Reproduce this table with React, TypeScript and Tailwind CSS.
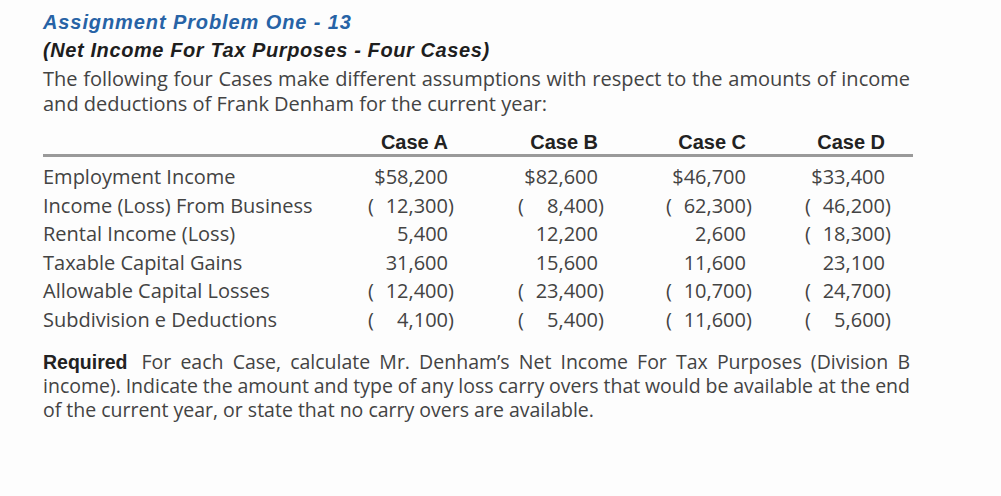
import React from 'react';

const cases = ['Case A', 'Case B', 'Case C', 'Case D'];

type Val = { v: string; neg?: boolean };

const rows: { label: string; vals: Val[] }[] = [
  { label: 'Employment Income',            vals: [{ v: '$58,200' }, { v: '$82,600' }, { v: '$46,700' }, { v: '$33,400' }] },
  { label: 'Income (Loss) From Business',  vals: [{ v: '12,300', neg: true }, { v: '8,400', neg: true }, { v: '62,300', neg: true }, { v: '46,200', neg: true }] },
  { label: 'Rental Income (Loss)',         vals: [{ v: '5,400' }, { v: '12,200' }, { v: '2,600' }, { v: '18,300', neg: true }] },
  { label: 'Taxable Capital Gains',        vals: [{ v: '31,600' }, { v: '15,600' }, { v: '11,600' }, { v: '23,100' }] },
  { label: 'Allowable Capital Losses',     vals: [{ v: '12,400', neg: true }, { v: '23,400', neg: true }, { v: '10,700', neg: true }, { v: '24,700', neg: true }] },
  { label: 'Subdivision e Deductions',     vals: [{ v: '4,100', neg: true }, { v: '5,400', neg: true }, { v: '11,600', neg: true }, { v: '5,600', neg: true }] },
];

// column widths after the label column, each ends where the figures line up
const colWidths = ['w-[88px]', 'w-[150px]', 'w-[148px]', 'w-[139px]'];

const Amount: React.FC<{ val: Val; width: string }> = ({ val, width }) => (
  <div className={`${width} flex justify-end`}>
    <div className="w-[80px] flex">
      <span className={val.neg ? '' : 'invisible'}>(</span>
      <span className="flex-1 text-right">{val.v}</span>
      <span className={`w-0 ${val.neg ? '' : 'invisible'}`}>)</span>
    </div>
  </div>
);

// justified line, as set in the book
const JLine: React.FC<{ children: React.ReactNode; className?: string }> = ({ children, className = '' }) => (
  <div className={`text-justify [text-align-last:justify] whitespace-nowrap ${className}`}>{children}</div>
);

export default function App() {
  return (
    <div className="min-h-[496px] w-[1001px] bg-[#fdfdfd] pl-[43px] pt-[8px] text-[#434343] font-['Open_Sans','Liberation_Sans',sans-serif]">
      <div className="w-[867px]">
        <h1 className="text-[20px] leading-[28px] font-bold italic tracking-[0.9px] text-[#2763a6] font-['Liberation_Sans',sans-serif]">
          Assignment Problem One - 13
        </h1>
        <h2 className="text-[20px] leading-[28px] font-bold italic tracking-[0.6px] text-[#1e1e1e] font-['Liberation_Sans',sans-serif]">
          (Net Income For Tax Purposes - Four Cases)
        </h2>
        <div className="mt-[2px] text-[20px] leading-[25px]">
          <JLine>The following four Cases make different assumptions with respect to the amounts of income</JLine>
          <div>and deductions of Frank Denham for the current year:</div>
        </div>

        {/* Table */}
        <div className="mt-[15px] w-[870px]">
          <div className="flex text-[20px] leading-[23px] font-bold text-[#222] font-['Liberation_Sans',sans-serif]">
            <div className="w-[317px]" />
            {cases.map((c, i) => (
              <div key={c} className={`${colWidths[i]} text-right`}>{c}</div>
            ))}
          </div>
          <div className="h-[3px] bg-[#9a9a9a]" />
          <div className="mt-[6px] text-[20px] leading-[28.6px]">
            {rows.map((r) => (
              <div key={r.label} className="flex">
                <div className="w-[317px]">{r.label}</div>
                {r.vals.map((val, i) => (
                  <Amount key={i} val={val} width={colWidths[i]} />
                ))}
              </div>
            ))}
          </div>
        </div>

        <div className="mt-[15px] text-[19.5px] leading-[24px]">
          <JLine>
            <span className="font-bold text-[#222] font-['Liberation_Sans',sans-serif]">Required</span>
            <span className="ml-[14px]">For each Case, calculate Mr. Denham’s Net Income For Tax Purposes (Division B</span>
          </JLine>
          <JLine className="[word-spacing:-1px]">
            income). Indicate the amount and type of any loss carry overs that would be available at the end
          </JLine>
          <div>of the current year, or state that no carry overs are available.</div>
        </div>
      </div>
    </div>
  );
}
